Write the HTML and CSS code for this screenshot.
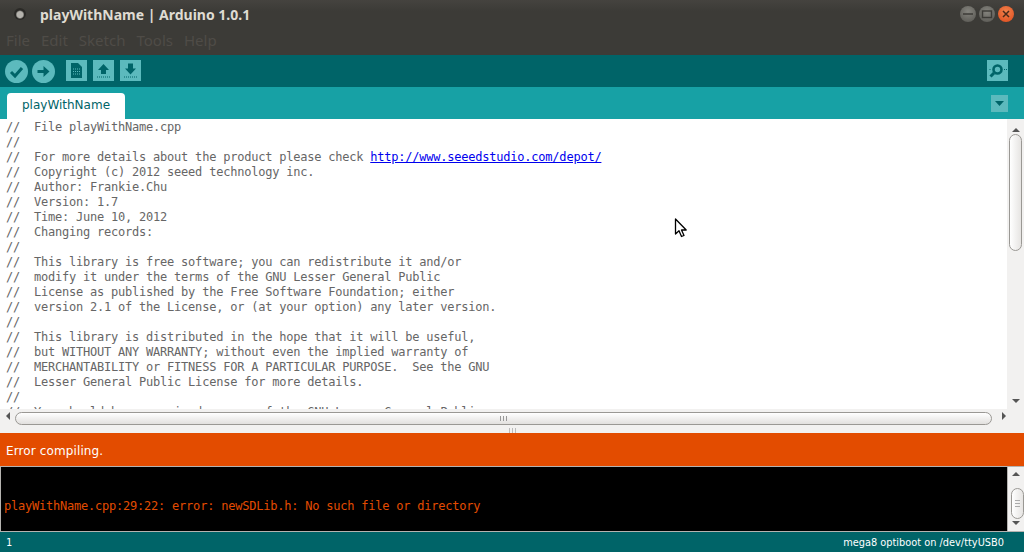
FILE: index.html
```html
<!DOCTYPE html>
<html lang="en">
<head>
<meta charset="utf-8">
<title>playWithName | Arduino 1.0.1</title>
<link rel="stylesheet" href="styles.css">
</head>
<body>
<div class="app">
  <header class="titlebar">
    <div class="title-row">
      <span class="app-dot"></span>
      <span class="title">playWithName | Arduino 1.0.1</span>
      <div class="winbtns">
        <span class="winbtn"><svg viewBox="0 0 16 16" width="16" height="16"><path d="M3 8h10" stroke="#3c3b37" stroke-width="1.5"/></svg></span>
        <span class="winbtn"><svg viewBox="0 0 16 16" width="16" height="16"><rect x="3.5" y="5" width="9" height="6.5" fill="none" stroke="#3c3b37" stroke-width="1.4"/></svg></span>
        <span class="winbtn close"><svg viewBox="0 0 16 16" width="16" height="16"><path d="M5 5l6 6M11 5l-6 6" stroke="#4a2a1a" stroke-width="1.5"/></svg></span>
      </div>
    </div>
    <nav class="menu"><span>File</span><span>Edit</span><span>Sketch</span><span>Tools</span><span>Help</span></nav>
  </header>

  <div class="toolbar">
    <span class="tool round"><svg viewBox="0 0 23 23" width="23" height="23"><path d="M6 12l4 4 7-8" fill="none" stroke="#006468" stroke-width="3"/></svg></span>
    <span class="tool round"><svg viewBox="0 0 23 23" width="23" height="23"><path d="M5.500 10h6V6l6 5.500-6 5.500v-4h-6z" fill="#006468"/></svg></span>
    <div class="file-tools">
      <span class="tool square"><svg viewBox="0 0 21 21" width="21" height="21"><path d="M5 3h7l4 4v11H5z" fill="#006468"/><path d="M7 9h7M7 11.500h7M7 14h7" stroke="#5cbabd" stroke-width="1" stroke-dasharray="1 1"/></svg></span>
      <span class="tool square"><svg viewBox="0 0 21 21" width="21" height="21"><path d="M10.500 4l5.500 6h-3v4H8v-4H5z" fill="#006468"/><path d="M4 17h13" stroke="#006468" stroke-dasharray="1 1"/></svg></span>
      <span class="tool square"><svg viewBox="0 0 21 21" width="21" height="21"><path d="M8 3.500h5v5h3l-5.500 6-5.500-6h3z" fill="#006468"/><path d="M4 17h13" stroke="#006468" stroke-dasharray="1 1"/></svg></span>
    </div>
    <span class="tool square monitor"><svg viewBox="0 0 21 21" width="21" height="21"><circle cx="10.500" cy="9.500" r="4" fill="none" stroke="#006468" stroke-width="2.600"/><path d="M7 13l-3.500 3.500" stroke="#006468" stroke-width="3"/><path d="M2.500 9.500h1M17 9.500h1M19 9.500h1" stroke="#006468"/></svg></span>
  </div>

  <div class="tabbar">
    <span class="tab">playWithName</span>
    <span class="tabmenu"><svg viewBox="0 0 17 17" width="17" height="17"><path d="M4 6h9l-4.500 5z" fill="#006468"/></svg></span>
  </div>

  <main class="editor-wrap">
    <div class="editor-row">
      <pre class="code">//  File playWithName.cpp
//
//  For more details about the product please check <a class="link" href="#">http://www.seeedstudio.com/depot/</a>
//  Copyright (c) 2012 seeed technology inc.
//  Author: Frankie.Chu
//  Version: 1.7
//  Time: June 10, 2012
//  Changing records:
//
//  This library is free software; you can redistribute it and/or
//  modify it under the terms of the GNU Lesser General Public
//  License as published by the Free Software Foundation; either
//  version 2.1 of the License, or (at your option) any later version.
//
//  This library is distributed in the hope that it will be useful,
//  but WITHOUT ANY WARRANTY; without even the implied warranty of
//  MERCHANTABILITY or FITNESS FOR A PARTICULAR PURPOSE.  See the GNU
//  Lesser General Public License for more details.
//
//  You should have received a copy of the GNU Lesser General Public</pre>
      <div class="vscroll">
        <span class="arrow up"></span>
        <span class="thumb editor-thumb"></span>
        <span class="arrow down"></span>
      </div>
    </div>
    <div class="hscroll">
      <span class="arrow left"></span>
      <span class="hthumb"><i></i><i></i><i></i></span>
      <span class="arrow right"></span>
    </div>
    <div class="divider"><i></i><i></i><i></i></div>
  </main>

  <div class="status">Error compiling.</div>

  <div class="console">
    <pre class="console-text">playWithName.cpp:29:22: error: newSDLib.h: No such file or directory</pre>
    <div class="vscroll console-scroll">
      <span class="arrow up"></span>
      <span class="thumb console-thumb"><i></i><i></i><i></i></span>
      <span class="arrow down"></span>
    </div>
  </div>

  <footer class="linebar"><span class="lineno">1</span><span class="board">mega8 optiboot on /dev/ttyUSB0</span></footer>

  <svg class="cursor" viewBox="0 0 14 20" width="14" height="20"><path d="M1.500 1v15l3.500-3.200 2.500 5.700 2.500-1-2.500-5.500h4.700z" fill="#fff" stroke="#000" stroke-width="1.300" stroke-linejoin="round"/></svg>
</div>
</body>
</html>
```
FILE: styles.css
```css
* { box-sizing: border-box; }
html, body { margin: 0; padding: 0; }
body { width: 1024px; height: 552px; overflow: hidden; background: #f2f1f0; }
.app { position: relative; display: flex; flex-direction: column; width: 1024px; height: 552px; font-family: "DejaVu Sans", sans-serif; }

.titlebar { height: 55px; background: linear-gradient(#45433f, #3c3b37 20%); display: flex; flex-direction: column; }
.title-row { height: 28px; display: flex; align-items: center; padding-left: 14px; }
.app-dot { width: 12px; height: 12px; border-radius: 50%; background: radial-gradient(circle at 50% 55%, #b5b3ad 0 3px, #2a2926 4.500px); margin-right: 14px; }
.title { font: bold 14px "Noto Sans", sans-serif; color: #dfdbd2; flex: 1; }
.winbtns { display: flex; gap: 3px; padding-right: 10px; }
.winbtn { width: 16px; height: 16px; border-radius: 50%; background: radial-gradient(circle at 50% 35%, #85847e, #55544f); display: flex; }
.winbtn.close { background: radial-gradient(circle at 50% 35%, #f2824c, #dc4a1c); }
.menu { height: 27px; display: flex; gap: 11px; padding: 2px 0 0 6px; font: 15px/20px "Noto Sans", sans-serif; color: #4f4c47; }

.toolbar { height: 32px; background: #006468; display: flex; align-items: center; padding: 0 16px 0 5px; gap: 4px; }
.tool { width: 23px; height: 23px; display: flex; align-items: center; justify-content: center; background: #5cbabd; }
.tool.round { border-radius: 50%; }
.tool.square { width: 21px; height: 21px; margin-top: -1px; }
.file-tools { display: flex; gap: 6px; margin-left: 7px; flex: 1; }

.tabbar { height: 32px; background: #17a1a5; display: flex; justify-content: space-between; align-items: flex-end; padding-left: 7px; }
.tab { width: 118px; height: 26px; background: #fff; border-radius: 4px 4px 0 0; color: #006468; font: 12px/24px "DejaVu Sans", sans-serif; text-align: center; }
.tabmenu { width: 17px; height: 17px; background: #5cbabd; margin: 0 16px 7px 0; display: flex; }

.editor-wrap { height: 314px; display: flex; flex-direction: column; }
.editor-row { height: 290px; display: flex; background: #fff; }
.code { flex: 1; margin: 0; padding: 1px 0 0 6px; overflow: hidden; font: 12px/15px "DejaVu Sans Mono", monospace; letter-spacing: -0.22px; color: #666; }
.link { color: #0000ee; text-decoration: underline; }

.vscroll { width: 17px; background: #f2f1f0; position: relative; display: flex; flex-direction: column; align-items: center; }
.arrow { display: block; width: 0; height: 0; border: 4px solid transparent; position: absolute; }
.vscroll .arrow.up { border-top: 0; border-bottom: 4px solid #555; top: 9px; }
.vscroll .arrow.down { border-bottom: 0; border-top: 4px solid #555; bottom: 6px; }
.thumb { position: absolute; left: 2px; width: 13px; border: 1px solid #9a9894; border-radius: 7px; background: linear-gradient(90deg, #fff, #e6e4e2); }
.editor-thumb { top: 15px; height: 117px; }

.hscroll { height: 14px; position: relative; background: #f2f1f0; display: flex; align-items: center; }
.hscroll .arrow.left { left: 6px; border-left: 0; border-right: 4px solid #555; }
.hscroll .arrow.right { right: 18px; border-right: 0; border-left: 4px solid #555; }
.hthumb { position: absolute; left: 15px; right: 32px; top: 3px; height: 13px; border: 1px solid #9a9894; border-radius: 7px; background: linear-gradient(#fff, #e2e0de); display: flex; justify-content: center; align-items: center; gap: 2px; }
.hthumb i { width: 1px; height: 5px; background: #999; }
.divider { height: 10px; background: #f2f1f0; display: flex; justify-content: center; align-items: flex-start; gap: 2px; padding-top: 5px; }
.divider i { width: 1px; height: 5px; background: #bbb; }

.status { height: 33px; background: #e34c00; color: #fff; font: 12px/36px "DejaVu Sans", sans-serif; letter-spacing: 0.12px; padding-left: 6px; }

.console { height: 66px; display: flex; background: #f2f1f0; border-top: 1px solid #b5b3b0; border-bottom: 1px solid #b5b3b0; }
.console-text { flex: 1; margin: 0; background: #000; border-left: 1px solid #b5b3b0; border-right: 1px solid #b5b3b0; padding: 32px 0 0 3px; font: 12px/15px "DejaVu Sans Mono", monospace; letter-spacing: -0.22px; color: #e34c00; }
.console-scroll { width: 16px; }
.console-thumb { top: 21px; height: 31px; display: flex; flex-direction: column; justify-content: center; align-items: center; gap: 2px; left: 3px; }
.console-thumb i { width: 5px; height: 1px; background: #aaa; }
.console-scroll .arrow.up { top: 5px; }
.console-scroll .arrow.down { bottom: 6px; }

.linebar { height: 20px; background: #006468; color: #fff; display: flex; justify-content: space-between; align-items: center; padding: 1px 20px 0 6px; font: 9.800px "DejaVu Sans", sans-serif; }
.lineno { font: 10px "DejaVu Sans Mono", monospace; }

.cursor { position: absolute; left: 674px; top: 218px; }
```
